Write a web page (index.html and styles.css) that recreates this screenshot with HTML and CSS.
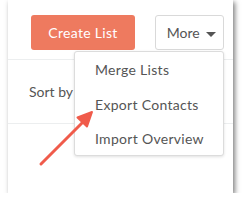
FILE: index.html
```html
<!DOCTYPE html>
<html lang="en">
<head>
    <meta charset="UTF-8">
    <title>Lists</title>
    <link rel="stylesheet" href="styles.css">
</head>
<body>
    <div class="panel">
        <div class="toolbar">
            <button class="btn-primary">Create List</button>
            <button class="btn-more">More <span class="caret"></span></button>
        </div>
        <div class="sort-row">Sort by</div>

        <ul class="dropdown">
            <li>Merge Lists</li>
            <li>Export Contacts</li>
            <li>Import Overview</li>
        </ul>

        <svg class="pointer" width="100" height="80" viewBox="0 0 100 80">
            <line x1="33" y1="64" x2="76" y2="21" stroke="#f05b4b" stroke-width="3" stroke-linecap="round"/>
            <polygon points="84,12 79,26.5 69.5,17.5" fill="#f05b4b" stroke="#f05b4b" stroke-width="2" stroke-linejoin="round"/>
        </svg>
    </div>
</body>
</html>
```

FILE: styles.css
```css
body {
    margin: 0;
    background-color: #fff;
    font-family: 'Lato', 'Open Sans', sans-serif;
    color: #555;
}
.panel {
    position: relative;
    margin-left: 8px;
    width: 225px;
    height: 193px;
    background-color: #fff;
    box-shadow: 2px 2px 5px rgba(0, 0, 0, 0.5);
    overflow: hidden;
}
.toolbar {
    display: flex;
    gap: 20px;
    padding: 15px 0 0 23px;
    height: 60px;
    box-sizing: border-box;
    border-bottom: 1px solid #eceeef;
}
button {
    font-family: inherit;
    font-size: 14px;
    height: 35px;
    border-radius: 3px;
    cursor: pointer;
}
.btn-primary {
    width: 104px;
    background-color: #ee7a5f;
    color: #fff;
    border: none;
    letter-spacing: 0.3px;
}
.btn-more {
    width: 69px;
    background-color: #fff;
    color: #555;
    border: 1px solid #d9d9d9;
    padding: 0 0 0 4px;
}
.caret {
    display: inline-block;
    margin-left: 3px;
    vertical-align: middle;
    border-left: 5px solid transparent;
    border-right: 5px solid transparent;
    border-top: 5px solid #555;
}
.sort-row {
    height: 63px;
    line-height: 63px;
    padding-left: 21px;
    font-size: 14px;
    border-bottom: 1px solid #eceeef;
}
.dropdown {
    position: absolute;
    left: 66px;
    top: 51px;
    width: 150px;
    height: 105px;
    box-sizing: border-box;
    margin: 0;
    padding: 1px 0 0;
    list-style: none;
    background-color: #fff;
    border: 1px solid #dcdcdc;
    border-radius: 3px;
    box-shadow: 0 1px 3px rgba(0, 0, 0, 0.12);
}
.dropdown li {
    height: 34.5px;
    line-height: 34px;
    padding-left: 20px;
    font-size: 14px;
    letter-spacing: 0.3px;
}
.pointer {
    position: absolute;
    left: 0;
    top: 100px;
}
```
